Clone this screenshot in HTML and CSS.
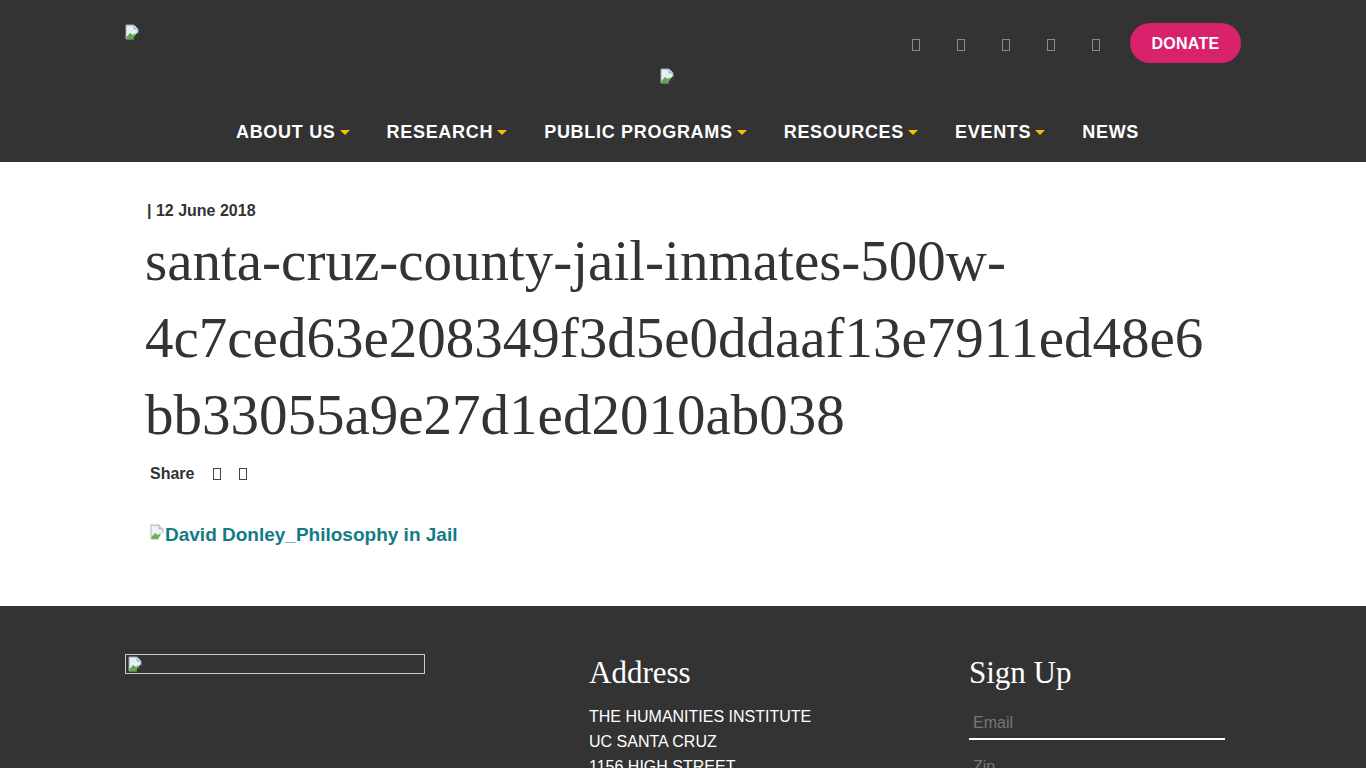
FILE: index.html
```html
<!DOCTYPE html>
<html lang="en">
<head>
<meta charset="utf-8">
<title>santa-cruz-county-jail-inmates</title>
<link rel="stylesheet" href="styles.css">
</head>
<body>
<header class="site-header">
  <div class="container top-row">
    <a class="logo" href="#"><svg class="broken" viewBox="0 0 16 16" width="16" height="16"><path d="M2 1h8l4 4v5l-4 5H2z" fill="#e8eef6" stroke="#9aa7b5" stroke-width="1"/><path d="M2.5 13 6 9l3 2 2.5-2V12L9 15H2.5z" fill="#5fa84a"/><path d="M10 1v4h4" fill="#d9e1ea" stroke="#9aa7b5" stroke-width="1"/><path d="M14 9l-4 6" stroke="#2b2b2b" stroke-width="1.6"/></svg></a>
    <div class="actions">
      <ul class="social">
        <li><span class="tofu"></span></li>
        <li><span class="tofu"></span></li>
        <li><span class="tofu"></span></li>
        <li><span class="tofu"></span></li>
        <li><span class="tofu"></span></li>
      </ul>
      <a class="donate" href="#">DONATE</a>
    </div>
  </div>
  <div class="center-logo"><svg class="broken" viewBox="0 0 16 16" width="16" height="16"><path d="M2 1h8l4 4v5l-4 5H2z" fill="#e8eef6" stroke="#9aa7b5" stroke-width="1"/><path d="M2.5 13 6 9l3 2 2.5-2V12L9 15H2.5z" fill="#5fa84a"/><path d="M10 1v4h4" fill="#d9e1ea" stroke="#9aa7b5" stroke-width="1"/><path d="M14 9l-4 6" stroke="#2b2b2b" stroke-width="1.6"/></svg></div>
  <nav class="main-nav">
    <a href="#">ABOUT US<span class="caret"></span></a>
    <a href="#">RESEARCH<span class="caret"></span></a>
    <a href="#">PUBLIC PROGRAMS<span class="caret"></span></a>
    <a href="#">RESOURCES<span class="caret"></span></a>
    <a href="#">EVENTS<span class="caret"></span></a>
    <a href="#">NEWS</a>
  </nav>
</header>

<main class="content">
  <div class="container inner">
    <p class="meta">| 12 June 2018</p>
    <h1 class="title">santa-cruz-county-jail-inmates-500w-4c7ced63e208349f3d5e0ddaaf13e7911ed48e6bb33055a9e27d1ed2010ab038</h1>
    <div class="share">Share <span class="tofu dark"></span><span class="tofu dark"></span></div>
    <p class="attachment"><a href="#"><svg class="broken" viewBox="0 0 16 16" width="16" height="16"><path d="M2 1h8l4 4v5l-4 5H2z" fill="#eef2f7" stroke="#a9b4c0" stroke-width="1"/><path d="M2.5 13 6 9l3 2 2.5-2V12L9 15H2.5z" fill="#6cb255"/><path d="M10 1v4h4" fill="#dfe6ee" stroke="#a9b4c0" stroke-width="1"/><path d="M14 9l-4 6" stroke="#fff" stroke-width="1.6"/></svg>David Donley_Philosophy in Jail</a></p>
  </div>
</main>

<footer class="site-footer">
  <div class="container footer-grid">
    <div class="f-logo"><svg class="broken" viewBox="0 0 16 16" width="16" height="16"><path d="M2 1h8l4 4v5l-4 5H2z" fill="#e8eef6" stroke="#9aa7b5" stroke-width="1"/><path d="M2.5 13 6 9l3 2 2.5-2V12L9 15H2.5z" fill="#5fa84a"/><path d="M10 1v4h4" fill="#d9e1ea" stroke="#9aa7b5" stroke-width="1"/><path d="M14 9l-4 6" stroke="#2b2b2b" stroke-width="1.6"/></svg></div>
    <div class="f-col">
      <h2>Address</h2>
      <p class="addr">THE HUMANITIES INSTITUTE<br>UC SANTA CRUZ<br>1156 HIGH STREET</p>
    </div>
    <div class="f-col">
      <h2>Sign Up</h2>
      <input class="field" type="text" placeholder="Email">
      <input class="field" type="text" placeholder="Zip">
    </div>
  </div>
</footer>
</body>
</html>
```
FILE: styles.css
```css
* { box-sizing: border-box; }
html, body { margin: 0; padding: 0; }
body {
  font-family: "Liberation Sans", Arial, sans-serif;
  background: #fff;
  color: #333;
}
.container {
  width: 1116px;
  margin: 0 auto;
}
.broken { display: block; }

/* header */
.site-header {
  background: #333;
  height: 162px;
}
.top-row {
  display: flex;
  justify-content: space-between;
  align-items: flex-start;
  padding-top: 23px;
}
.logo { margin-top: 1px; margin-left: -1px; }
.actions {
  display: flex;
  align-items: center;
}
.social {
  list-style: none;
  margin: 3px 28px 0 0;
  padding: 0;
  display: flex;
  gap: 33px;
}
.social li { width: 12px; display: flex; justify-content: center; }
.tofu {
  display: inline-block;
  width: 8px;
  height: 12px;
  border: 1px solid #8a8a8a;
}
.donate {
  display: inline-flex;
  align-items: center;
  justify-content: center;
  width: 111px;
  height: 40px;
  border-radius: 20px;
  background: #d8226b;
  color: #fff;
  font-weight: bold;
  font-size: 16px;
  padding-top: 1px;
  text-decoration: none;
  letter-spacing: 0.3px;
}
.center-logo {
  display: flex;
  justify-content: center;
  margin-top: 5px;
  padding-right: 33px;
}
.main-nav {
  display: flex;
  justify-content: center;
  gap: 37px;
  margin-top: 36px;
  padding-left: 9px;
}
.main-nav a {
  color: #fff;
  text-decoration: none;
  font-weight: bold;
  font-size: 18px;
  line-height: 24px;
  letter-spacing: 0.7px;
  display: inline-flex;
  align-items: center;
}
.caret {
  display: inline-block;
  margin-left: 4px;
  width: 0;
  height: 0;
  border-left: 5px solid transparent;
  border-right: 5px solid transparent;
  border-top: 5px solid #f2c200;
}

/* content */
.content { background: #fff; }
.inner {
  padding: 40px 20px 60px;
}
.meta {
  margin: 0 0 0 2px;
  font-weight: bold;
  font-size: 16px;
  line-height: 18px;
  color: #333;
}
.title {
  margin: 2px 0 0;
  font-family: "Liberation Serif", "Times New Roman", serif;
  font-weight: normal;
  font-size: 57px;
  line-height: 77px;
  color: #333;
  overflow-wrap: break-word;
}
.share {
  margin: 9px 0 0 5px;
  font-weight: bold;
  font-size: 16px;
  line-height: 24px;
  display: flex;
  align-items: center;
}
.tofu.dark { border-color: #444; width: 8px; height: 12px; }
.share .tofu:first-of-type { margin-left: 19px; }
.share .tofu + .tofu { margin-left: 18px; }
.attachment {
  margin: 38px 0 0 4px;
}
.attachment a {
  display: inline-flex;
  align-items: flex-end;
  color: #127b86;
  text-decoration: none;
  font-weight: bold;
  font-size: 19px;
  line-height: 22px;
}
.attachment .broken { margin-bottom: 6px; }

/* footer */
.site-footer {
  background: #333;
  color: #fff;
  height: 162px;
  overflow: hidden;
}
.footer-grid {
  display: grid;
  grid-template-columns: 464px 380px 1fr;
  padding-top: 48px;
}
.f-logo {
  width: 300px;
  height: 20px;
  border: 1px solid #c8c8c8;
  padding: 1px;
}
.f-col h2 {
  margin: 2px 0 0;
  font-family: "Liberation Serif", "Times New Roman", serif;
  font-weight: normal;
  font-size: 31px;
  line-height: 34px;
  color: #fff;
}
.addr {
  margin: 14px 0 0;
  font-size: 16px;
  line-height: 25px;
  color: #fff;
}
.field {
  display: block;
  width: 256px;
  border: 0;
  border-bottom: 2px solid #fff;
  background: transparent;
  font-family: "Liberation Sans", Arial, sans-serif;
  font-size: 16px;
  padding: 4px 4px 6px;
  color: #fff;
  margin-top: 20px;
  outline: none;
}
.field::placeholder { color: #777; }
.field + .field { margin-top: 14px; border-bottom-color: #555; }
```
